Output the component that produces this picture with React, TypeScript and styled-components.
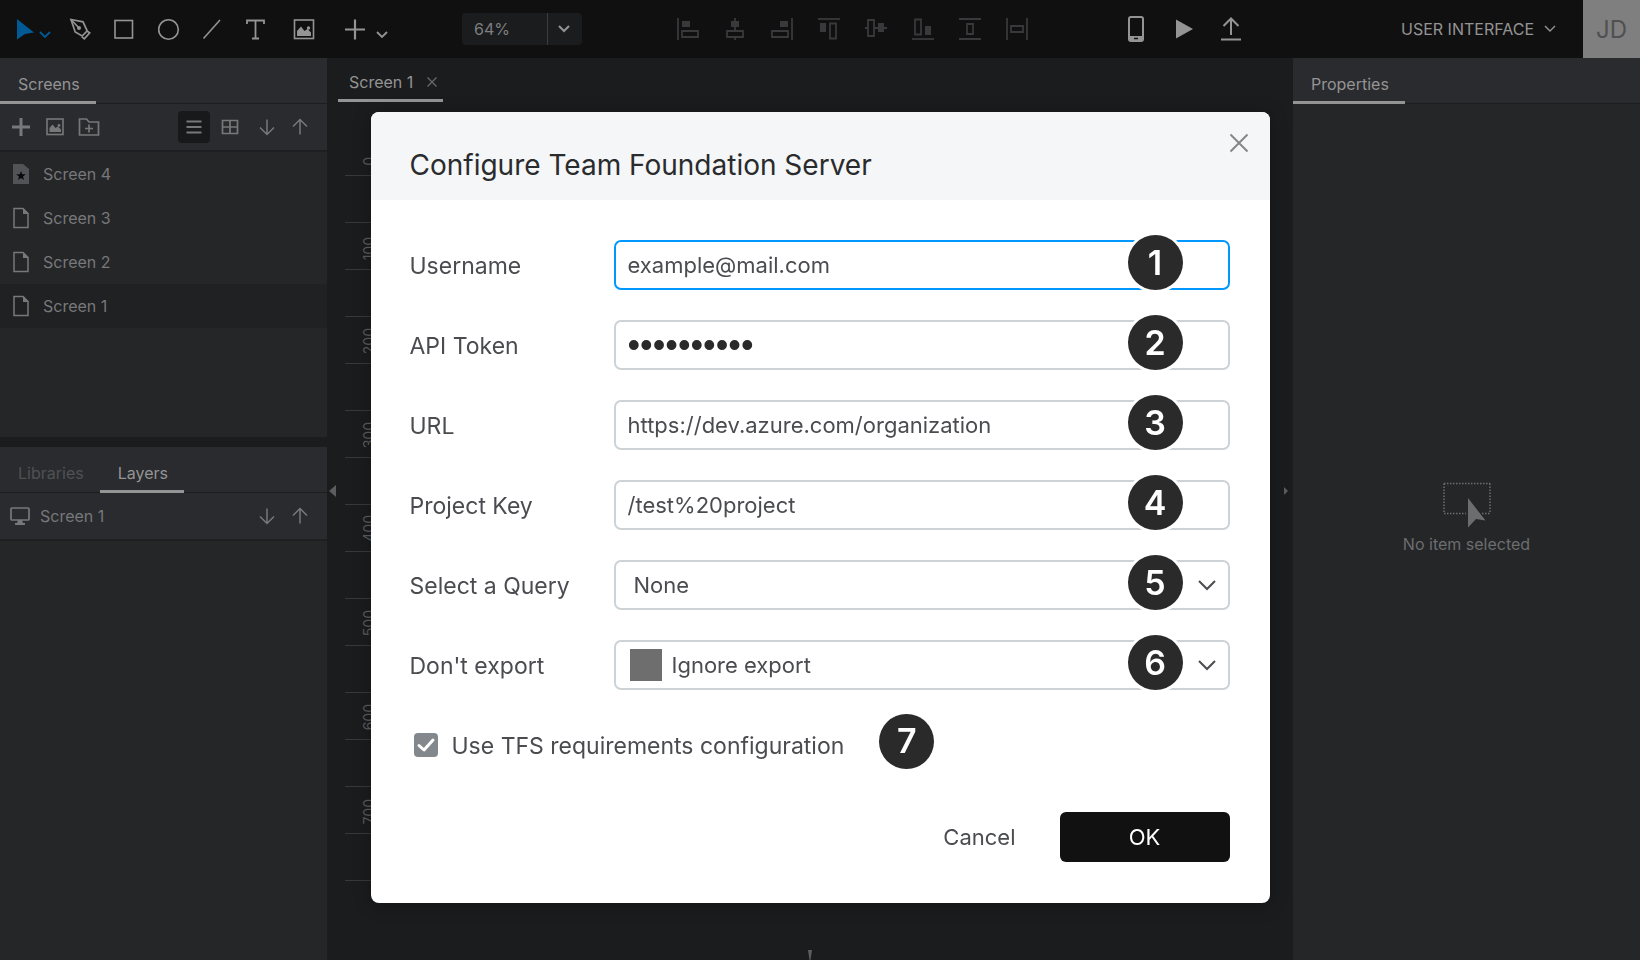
import React from 'react';
import styled, { createGlobalStyle } from 'styled-components';

const GlobalStyle = createGlobalStyle`
  *, *::before, *::after { box-sizing: border-box; }
  body { margin: 0; background: #1b1c1e; font-family: Inter, "Liberation Sans", sans-serif; }
  button, input, select { font: inherit; color: inherit; margin: 0; padding: 0; border: 0; background: none; }
  button { cursor: pointer; display: flex; align-items: center; justify-content: center; flex: none; }
  svg { display: block; flex: none; }
`;

const Editor = styled.div`
  display: flex;
  flex-direction: column;
  min-height: 100vh;
  color: #949494;
  font-size: 16px;
`;

/* ---------- top bar ---------- */

const TopBar = styled.header`
  display: flex;
  align-items: center;
  height: 58px;
  padding-left: 16px;
  background: #101010;
`;

const ToolButton = styled.button<{ $width?: number }>`
  width: ${(p) => p.$width ?? 44}px;
  height: 44px;
  color: #949494;
`;

const StartTool = styled(ToolButton)`
  justify-content: flex-start;
  color: #005a96;
`;

const ZoomBox = styled.div`
  position: relative;
  display: flex;
  margin-left: 60px;
  width: 120px;
  height: 32px;
  border-radius: 4px;
  background: #1b1c1e;
  svg { position: absolute; right: 12px; top: 12px; pointer-events: none; }
  &::after { content: ""; position: absolute; right: 34px; top: 0; bottom: 0; width: 1px; background: #3c3d3f; }
`;

const ZoomSelect = styled.select`
  appearance: none;
  width: 100%;
  padding-left: 12px;
  color: #7e7f80;
  outline: none;
`;

const AlignGroup = styled.div`
  display: flex;
  margin-left: 82px;
  button { color: #39393b; }
`;

const ActionGroup = styled.div`
  display: flex;
  margin-left: 72px;
`;

const ProjectButton = styled.button`
  gap: 10px;
  margin-left: auto;
  margin-right: 27px;
`;

const Avatar = styled.div`
  display: flex;
  align-items: center;
  justify-content: center;
  width: 57px;
  height: 58px;
  background: #7f7f7f;
  color: #4f5052;
  font-size: 24px;
`;

/* ---------- work area ---------- */

const Workspace = styled.div`
  display: flex;
  flex: 1;
`;

const Side = styled.aside<{ $width: number }>`
  display: flex;
  flex-direction: column;
  gap: 10px;
  width: ${(p) => p.$width}px;
  flex: none;
`;

const Panel = styled.section<{ $height?: number }>`
  ${(p) => (p.$height ? `height: ${p.$height}px;` : 'flex: 1;')}
  display: flex;
  flex-direction: column;
  background: #252628;
`;

const Tabs = styled.div`
  display: flex;
  height: 46px;
  background: #2a2b2f;
  border-bottom: 1px solid #1c1d1f;
`;

const Tab = styled.button<{ $active?: boolean }>`
  height: 46px;
  padding: 8px 16px 0 18px;
  color: ${(p) => (p.$active ? '#949494' : '#505153')};
  border-bottom: 3px solid ${(p) => (p.$active ? '#949494' : 'transparent')};
`;

const PanelBar = styled.div`
  display: flex;
  align-items: center;
  justify-content: space-between;
  height: 48px;
  padding: 0 11px 0 5px;
  background: #2a2b2f;
  border-bottom: 2px solid #1e1f21;
  color: #77787a;
`;

const BarGroup = styled.div<{ $gap: number }>`
  display: flex;
  gap: ${(p) => p.$gap}px;
`;

const BarButton = styled.button<{ $on?: boolean }>`
  width: 32px;
  height: 32px;
  border-radius: 4px;
  background: ${(p) => (p.$on ? '#18191b' : 'none')};
`;

const ScreenList = styled.ul`
  margin: 0;
  padding: 0;
  list-style: none;
`;

const ScreenItem = styled.li<{ $selected?: boolean }>`
  display: flex;
  align-items: center;
  gap: 13px;
  height: 44px;
  padding-left: 12px;
  color: #77787a;
  background: ${(p) => (p.$selected ? '#202123' : 'none')};
`;

const LayerName = styled.div`
  display: flex;
  align-items: center;
  gap: 10px;
  padding-left: 5px;
`;

const Canvas = styled.main`
  position: relative;
  display: flex;
  flex-direction: column;
  flex: 1;
  min-width: 0;
  background: #1b1c1e;
`;

const CanvasTab = styled.div`
  display: flex;
  align-items: center;
  align-self: flex-start;
  gap: 13px;
  height: 44px;
  margin-left: 11px;
  padding: 6px 5px 0 11px;
  border-bottom: 3px solid #949494;
  button { color: #66676a; }
`;

const Ruler = styled.ol`
  margin: 27px 0 0 18px;
  padding: 0;
  list-style: none;
  width: 40px;
`;

const Tick = styled.li`
  display: flex;
  align-items: flex-end;
  justify-content: flex-end;
  height: 47px;
  padding: 0 7px 9px 0;
  border-bottom: 1px solid #38393b;
  font-size: 14px;
  line-height: 18px;
  color: #5c5d5f;
`;

const TickLabel = styled.span`
  writing-mode: vertical-rl;
  transform: rotate(180deg);
`;

const EdgeHandle = styled.button<{ $side: 'left' | 'right' }>`
  position: absolute;
  top: 426px;
  ${(p) => p.$side}: ${(p) => (p.$side === 'left' ? 1 : 4)}px;
  height: 14px;
  color: #5c5d5f;
`;

const BottomHandle = styled.button`
  margin-top: auto;
  align-self: center;
  color: #5c5d5f;
`;

const Empty = styled.div`
  display: flex;
  flex-direction: column;
  align-items: center;
  gap: 6px;
  margin-top: 378px;
  color: #6c6d6f;
`;

/* ---------- dialog ---------- */

const Overlay = styled.div`
  position: fixed;
  inset: 0;
  display: flex;
  justify-content: center;
  align-items: flex-start;
  padding: 112px 20px 20px;
  overflow: auto;
`;

const Dialog = styled.form`
  width: 100%;
  max-width: 899px;
  border-radius: 8px;
  background: #fff;
  color: #4b4c50;
  font-size: 23px;
  line-height: 28px;
  box-shadow: 0 2px 18px rgba(0, 0, 0, 0.3);
`;

const DialogHeader = styled.div`
  display: flex;
  align-items: flex-start;
  justify-content: space-between;
  height: 88px;
  padding: 16px 16px 0 39px;
  border-radius: 8px 8px 0 0;
  background: #f5f6f8;
  color: #858688;
`;

const Title = styled.h1`
  margin: 20px 0 0;
  font-size: 28px;
  line-height: 34px;
  font-weight: 400;
  color: #2a2b2d;
`;

const CloseButton = styled.button`
  width: 30px;
  height: 30px;
`;

const Fields = styled.div`
  display: flex;
  flex-direction: column;
  gap: 30px;
  padding: 40px 40px 41px 39px;
`;

const Row = styled.div`
  position: relative;
  display: flex;
  align-items: center;
  height: 50px;
`;

const Label = styled.label`
  width: 204px;
  flex: none;
  padding-top: 2px;
`;

const Box = styled.div<{ $focused?: boolean }>`
  position: relative;
  display: flex;
  align-items: center;
  gap: 10px;
  flex: 1;
  min-width: 0;
  height: 50px;
  padding: 0 12px;
  border: 2px solid ${(p) => (p.$focused ? '#0098ff' : '#cdd2d6')};
  border-radius: 7px;
  > svg { position: absolute; right: 12px; pointer-events: none; }
`;

const TextInput = styled.input`
  flex: 1;
  min-width: 0;
  height: 44px;
  font-size: 22px;
  outline: none;
`;

const TokenInput = styled(TextInput)`
  font-family: "Liberation Sans", sans-serif;
  font-size: 36px;
  color: #2a2a2a;
`;

const Select = styled.select<{ $indent?: boolean }>`
  appearance: none;
  flex: 1;
  min-width: 0;
  height: 44px;
  padding-left: ${(p) => (p.$indent ? 6 : 0)}px;
  font-size: 22px;
  outline: none;
`;

const Swatch = styled.span`
  width: 32px;
  height: 32px;
  margin-left: 2px;
  background: #6e6e6e;
`;

const Badge = styled.span`
  display: flex;
  align-items: center;
  justify-content: center;
  width: 55px;
  height: 55px;
  border-radius: 50%;
  background: #2a2a2a;
  box-shadow: 0 0 0 3px #fff;
  color: #fff;
  font-size: 34px;
  line-height: 34px;
  font-weight: 600;
`;

const FieldBadge = styled(Badge)`
  position: absolute;
  right: 47px;
  top: -5px;
`;

const CheckLabel = styled.label`
  display: flex;
  align-items: center;
  gap: 14px;
  margin: 0 35px 0 4px;
`;

const CheckText = styled.span`
  padding-top: 2px;
`;

const CheckMark = styled.span`
  position: relative;
  display: flex;
  svg { position: absolute; left: 0; top: 0; pointer-events: none; }
`;

const Checkbox = styled.input`
  appearance: none;
  width: 24px;
  height: 24px;
  border-radius: 4px;
  background: #82888c;
`;

const CheckRow = styled(Row)`
  ${Badge} { margin-top: -8px; }
`;

const Footer = styled.div`
  display: flex;
  justify-content: flex-end;
  gap: 44px;
  margin-top: 12px;
`;

const CancelButton = styled.button`
  height: 50px;
  font-size: 22px;
`;

const OkButton = styled.button`
  width: 170px;
  height: 50px;
  border-radius: 6px;
  background: #111;
  color: #fff;
  font-size: 22px;
`;

/* ---------- icons ---------- */

type IconProps = { w?: number; h?: number; sw?: number; children: React.ReactNode };
const Icon = ({ w = 24, h = 24, sw = 2, children }: IconProps) => (
  <svg width={w} height={h} viewBox={`0 0 ${w} ${h}`} fill="none" stroke="currentColor" strokeWidth={sw} aria-hidden="true">
    {children}
  </svg>
);
const solid = { fill: 'currentColor', stroke: 'none' };

const Chevron = ({ w = 12, h = 8, sw = 2 }) => (
  <Icon w={w} h={h} sw={sw}><path d={`M1 1 L${w / 2} ${h - 2} L${w - 1} 1`} /></Icon>
);
const Picture = () => (
  <>
    <rect x="2.5" y="3" width="19" height="18.5" strokeWidth="1.6" />
    <path {...solid} d="M5 19V14l4-4.500 3.500 4.500 3-2 3.500 3.500V19Z" />
    <circle {...solid} cx="16.500" cy="11" r="1.700" />
  </>
);
const SmallPicture = () => (
  <Icon w={18} h={18} sw={1.6}>
    <rect x="1" y="1" width="16" height="15.500" />
    <path {...solid} d="M3.500 14V10l3-3.500 3 3.500 2.500-1.500 3 3V14Z" />
    <circle {...solid} cx="13" cy="7.500" r="1.400" />
  </Icon>
);
const ArrowDown = () => <Icon w={18} h={18} sw={1.5}><path d="M9 1.500V16M2 9.500l7 7 7-7" /></Icon>;
const ArrowUp = () => <Icon w={18} h={18} sw={1.5}><path d="M9 16.500V2M2 8.500l7-7 7 7" /></Icon>;
const PageIcon = () => <Icon w={18} h={22} sw={1.5}><path d="M2 1.500h9l5 5v14H2Z" /><path {...solid} d="M11 1v6h6Z" /></Icon>;
const StarPageIcon = () => (
  <Icon w={18} h={22}>
    <path {...solid} fill="#515356" d="M1 1h10l6 5v15H1Z" />
    <path {...solid} fill="#08090a" d="M9 8l1.200 3.200 3.600.1-2.800 2.200 1 3.500L9 15l-3 2 1-3.500-2.800-2.200 3.600-.1Z" />
  </Icon>
);

const drawTools: { name: string; width?: number; art: React.ReactNode }[] = [
  {
    name: 'Pen',
    art: (
      <Icon sw={1.7}>
        <path d="M3 2.500l12 2.300 4.200 9-5 5.200-7-4Z" />
        <path d="M3 2.500l7.500 8" />
        <circle {...solid} cx="11" cy="11" r="2" />
        <path d="M19.300 14.200l2.400 1.700-5.400 6-2.600-2.200" />
      </Icon>
    ),
  },
  { name: 'Rectangle', art: <Icon sw={1.6}><rect x="3" y="3.500" width="17.500" height="17.500" /></Icon> },
  { name: 'Ellipse', art: <Icon sw={1.6}><circle cx="12.500" cy="12.500" r="9.800" /></Icon> },
  { name: 'Line', art: <Icon sw={1.6}><path d="M3.500 21.500L20 3" /></Icon> },
  { name: 'Text', art: <Icon sw={1.8}><path d="M3 7V3.500h17V7M11.500 3.500V21M8 21.500h7" /></Icon> },
  { name: 'Image', width: 52, art: <Icon><Picture /></Icon> },
];

const alignTools: { name: string; art: React.ReactNode }[] = [
  { name: 'Align left', art: <><path d="M2 1v22" /><path {...solid} d="M6 4h8v6H6Z" /><path d="M6 14h16v6H6Z" /></> },
  { name: 'Align center', art: <><path d="M12 1v13M12 20v3" /><path {...solid} d="M8 4h8v6H8Z" /><path d="M4 14h16v6H4Z" /></> },
  { name: 'Align right', art: <><path d="M22 1v22" /><path {...solid} d="M10 4h8v6h-8Z" /><path d="M2 14h16v6H2Z" /></> },
  { name: 'Align top', art: <><path d="M1 2h22" /><path {...solid} d="M3 6h6v9H3Z" /><path d="M13 6.500h6v15h-6Z" /></> },
  { name: 'Align middle', art: <><path d="M1 11h3M10 11h13" /><path d="M4 3h6v16H4Z" /><path {...solid} d="M14 6h6v9h-6Z" /></> },
  { name: 'Align bottom', art: <><path d="M1 22h22" /><path d="M4 2.500h6v15H4Z" /><path {...solid} d="M14 9h6v9h-6Z" /></> },
  { name: 'Distribute rows', art: <><path d="M1 2h22M1 22h22" /><path d="M9 7h6v10H9Z" /></> },
  { name: 'Distribute columns', art: <><path d="M2 1v22M22 1v22" /><path d="M6 9h12v6H6Z" /></> },
];

const screens = ['Screen 4', 'Screen 3', 'Screen 2', 'Screen 1'];
const ticks = ['0', '', '100', '', '200', '', '300', '', '400', '', '500', '', '600', '', '700', ''];

const textFields = [
  { id: 'username', label: 'Username', value: 'example@mail.com' },
  { id: 'token', label: 'API Token', value: 'abcdefghij', secret: true },
  { id: 'url', label: 'URL', value: 'https://dev.azure.com/organization' },
  { id: 'key', label: 'Project Key', value: '/test%20project' },
];

export default function App() {
  return (
    <>
      <GlobalStyle />
      <Editor>
        <TopBar>
          <StartTool $width={42} aria-label="Select">
            <Icon w={36}>
              <path {...solid} d="M1 2L18 15.500l-9 1.500-8 5.500Z" />
              <path d="M24 15l5 5 5-5" strokeWidth="1.800" />
            </Icon>
          </StartTool>
          {drawTools.map((t) => <ToolButton key={t.name} $width={t.width} aria-label={t.name}>{t.art}</ToolButton>)}
          <ToolButton $width={72} aria-label="Add">
            <Icon w={46}>
              <path d="M2 12.500h20M12 2.500v20" strokeWidth="2.200" />
              <path d="M34 15l5 5 5-5" strokeWidth="1.800" />
            </Icon>
          </ToolButton>
          <ZoomBox>
            <ZoomSelect aria-label="Zoom"><option>64%</option></ZoomSelect>
            <Chevron />
          </ZoomBox>
          <AlignGroup>
            {alignTools.map((t) => (
              <ToolButton key={t.name} $width={47} aria-label={t.name}><Icon sw={1.8}>{t.art}</Icon></ToolButton>
            ))}
          </AlignGroup>
          <ActionGroup>
            <ToolButton $width={48} aria-label="Device">
              <Icon w={16} h={26}><rect x="1" y="1" width="14" height="24" rx="2" /><path {...solid} d="M1 20h14v5H1Z" /><path d="M6 22.500h4" stroke="#101010" strokeWidth="1.500" /></Icon>
            </ToolButton>
            <ToolButton $width={48} aria-label="Simulate">
              <Icon><path {...solid} d="M4 2.500L21 12 4 21.500Z" /></Icon>
            </ToolButton>
            <ToolButton $width={46} aria-label="Share">
              <Icon><path d="M12 18V2M4.500 9L12 1.500 19.500 9M2 22.500h20" /></Icon>
            </ToolButton>
          </ActionGroup>
          <ProjectButton>USER INTERFACE<Chevron sw={1.4} /></ProjectButton>
          <Avatar>JD</Avatar>
        </TopBar>

        <Workspace>
          <Side $width={327}>
            <Panel $height={379}>
              <Tabs><Tab $active>Screens</Tab></Tabs>
              <PanelBar>
                <BarGroup $gap={2}>
                  <BarButton aria-label="Add screen"><Icon w={18} h={18} sw={3}><path d="M0 9h18M9 0v18" /></Icon></BarButton>
                  <BarButton aria-label="Add image"><SmallPicture /></BarButton>
                  <BarButton aria-label="Add folder"><Icon sw={1.7}><path d="M2.500 4h7l2.500 3h9.500v13h-19ZM12 9.500v8M8 13.500h8" /></Icon></BarButton>
                </BarGroup>
                <BarGroup $gap={5}>
                  <BarGroup $gap={4}>
                    <BarButton $on aria-label="List view"><Icon sw={1.8}><path d="M4.500 6.500h15M4.500 12h15M4.500 17.500h15" /></Icon></BarButton>
                    <BarButton aria-label="Grid view"><Icon sw={1.7}><path d="M4.500 5.500h15v13h-15ZM12 5.500v13M4.500 12h15" /></Icon></BarButton>
                  </BarGroup>
                  <BarGroup $gap={1}>
                    <BarButton aria-label="Move down"><ArrowDown /></BarButton>
                    <BarButton aria-label="Move up"><ArrowUp /></BarButton>
                  </BarGroup>
                </BarGroup>
              </PanelBar>
              <ScreenList>
                {screens.map((s, i) => (
                  <ScreenItem key={s} $selected={i === 3}>{i === 0 ? <StarPageIcon /> : <PageIcon />}{s}</ScreenItem>
                ))}
              </ScreenList>
            </Panel>
            <Panel>
              <Tabs><Tab>Libraries</Tab><Tab $active>Layers</Tab></Tabs>
              <PanelBar>
                <LayerName>
                  <Icon w={20} h={20} sw={1.7}><rect x="1" y="2" width="18" height="12" rx="1" /><path {...solid} d="M8 14h4l1 3h2v2H5v-2h2Z" /></Icon>
                  Screen 1
                </LayerName>
                <BarGroup $gap={1}>
                  <BarButton aria-label="Move layer down"><ArrowDown /></BarButton>
                  <BarButton aria-label="Move layer up"><ArrowUp /></BarButton>
                </BarGroup>
              </PanelBar>
            </Panel>
          </Side>

          <Canvas>
            <CanvasTab>
              Screen 1
              <button aria-label="Close tab"><Icon w={12} h={12} sw={1.4}><path d="M1.500 1.500l9 9M10.500 1.500l-9 9" /></Icon></button>
            </CanvasTab>
            <Ruler>
              {ticks.map((t, i) => <Tick key={i}>{t && <TickLabel>{t}</TickLabel>}</Tick>)}
            </Ruler>
            <BottomHandle aria-label="Show timeline"><Icon w={6} h={10}><path {...solid} d="M1 0h4L3.500 10h-1Z" /></Icon></BottomHandle>
            <EdgeHandle $side="left" aria-label="Collapse left panel"><Icon w={8} h={14}><path {...solid} d="M8 1v12L1 7Z" /></Icon></EdgeHandle>
            <EdgeHandle $side="right" aria-label="Collapse right panel"><Icon w={5} h={8}><path {...solid} d="M0 0v8l4-4Z" /></Icon></EdgeHandle>
          </Canvas>

          <Side $width={347}>
            <Panel>
              <Tabs><Tab $active>Properties</Tab></Tabs>
              <Empty>
                <Icon w={48} h={46} sw={1.5}>
                  <path d="M1 1.500h46M1 1.500v30M47 1.500v30M1 31.500h22M39 31.500h8" strokeDasharray="1.500 1.500" />
                  <path {...solid} d="M25 16l17.500 22.500-9.500-1.500-8 8.500Z" />
                </Icon>
                No item selected
              </Empty>
            </Panel>
          </Side>
        </Workspace>
      </Editor>

      <Overlay>
        <Dialog role="dialog" aria-labelledby="dialog-title" onSubmit={(e) => e.preventDefault()}>
          <DialogHeader>
            <Title id="dialog-title">Configure Team Foundation Server</Title>
            <CloseButton type="button" aria-label="Close"><Icon w={20} h={20}><path d="M1.500 1.500l17 17M18.500 1.500l-17 17" /></Icon></CloseButton>
          </DialogHeader>
          <Fields>
            {textFields.map((f, i) => (
              <Row key={f.id}>
                <Label htmlFor={f.id}>{f.label}</Label>
                <Box $focused={i === 0}>
                  {f.secret
                    ? <TokenInput id={f.id} type="password" defaultValue={f.value} autoComplete="off" />
                    : <TextInput id={f.id} defaultValue={f.value} />}
                </Box>
                <FieldBadge>{i + 1}</FieldBadge>
              </Row>
            ))}
            <Row>
              <Label htmlFor="query">Select a Query</Label>
              <Box>
                <Select id="query" $indent><option>None</option></Select>
                <Chevron w={18} h={11} />
              </Box>
              <FieldBadge>5</FieldBadge>
            </Row>
            <Row>
              <Label htmlFor="export">Don't export</Label>
              <Box>
                <Swatch />
                <Select id="export"><option>Ignore export</option></Select>
                <Chevron w={18} h={11} />
              </Box>
              <FieldBadge>6</FieldBadge>
            </Row>
            <CheckRow>
              <CheckLabel>
                <CheckMark>
                  <Checkbox type="checkbox" defaultChecked />
                  <svg width="24" height="24" viewBox="0 0 24 24" fill="none" stroke="#fff" strokeWidth="3" strokeLinecap="round" strokeLinejoin="round"><path d="M5 12.500l5 4.500 9-10" /></svg>
                </CheckMark>
                <CheckText>Use TFS requirements configuration</CheckText>
              </CheckLabel>
              <Badge>7</Badge>
            </CheckRow>
            <Footer>
              <CancelButton type="button">Cancel</CancelButton>
              <OkButton type="submit">OK</OkButton>
            </Footer>
          </Fields>
        </Dialog>
      </Overlay>
    </>
  );
}
